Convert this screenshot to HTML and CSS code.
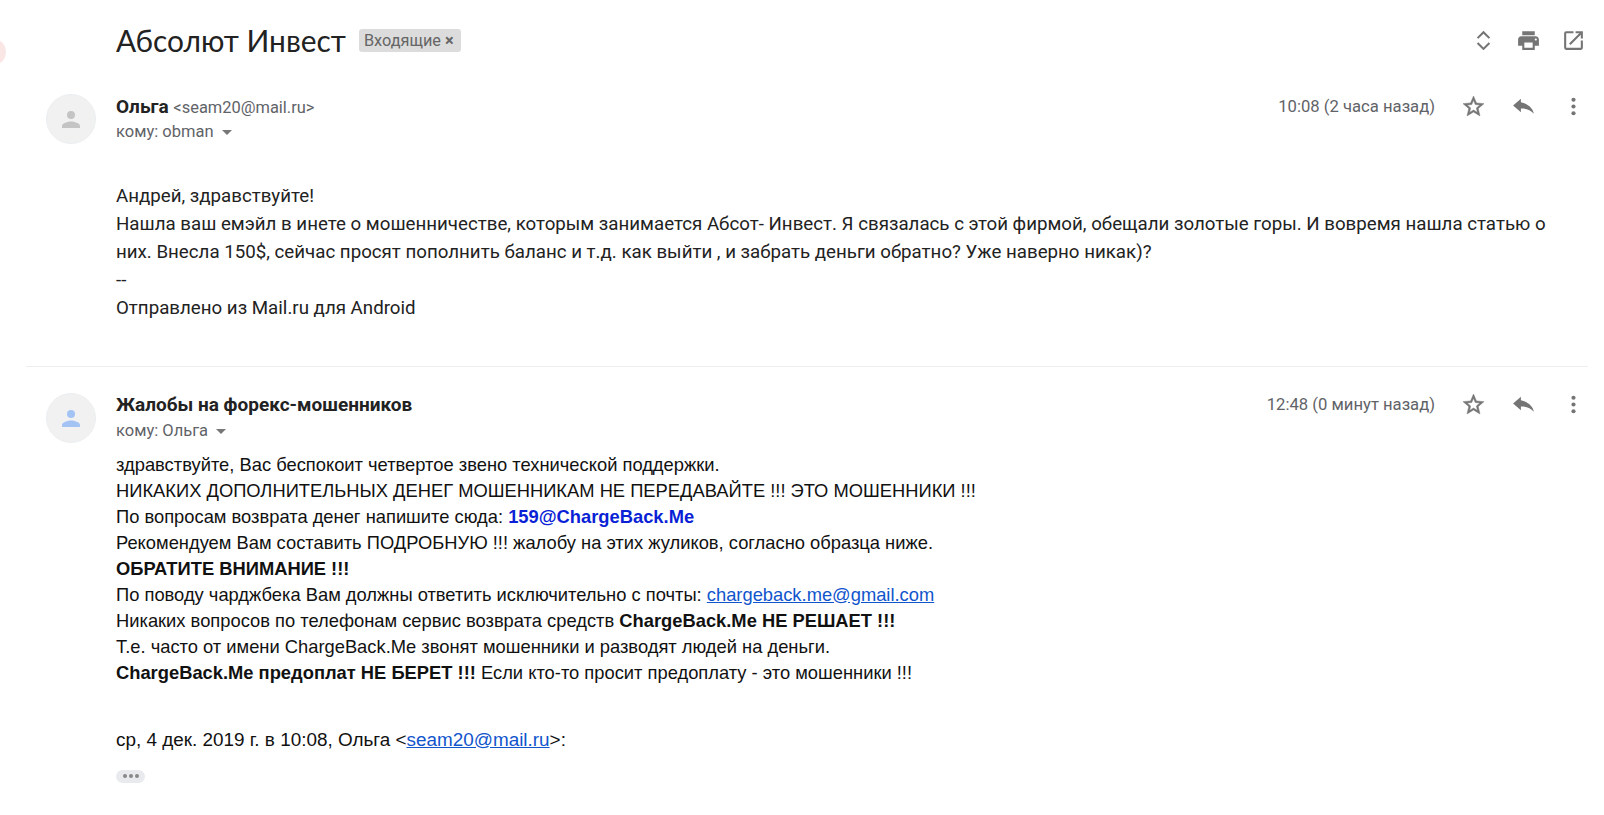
FILE: index.html
```html
<!DOCTYPE html>
<html lang="ru">
<head>
<meta charset="utf-8">
<title>Абсолют Инвест</title>
<link rel="stylesheet" href="styles.css">
</head>
<body>
<div class="edge-dot"></div>
<header class="subject-row">
  <h1 class="subject">Абсолют Инвест</h1>
  <span class="label">Входящие <span class="label-x">×</span></span>
  <div class="top-icons">
    <svg class="icon" viewBox="0 0 24 24"><path d="M12 5.400 17 10.400 18.400 9 12 2.600 5.600 9 7 10.400zM12 18.600 7 13.600 5.600 15 12 21.400 18.400 15 17 13.600z"/></svg>
    <svg class="icon" viewBox="0 0 24 24"><path d="M19 8H5c-1.660 0-3 1.340-3 3v6h4v4h12v-4h4v-6c0-1.660-1.340-3-3-3zm-3 11H8v-5h8v5zm3-7c-.55 0-1-.45-1-1s.45-1 1-1 1 .45 1 1-.45 1-1 1zm-1-9H6v4h12V3z"/></svg>
    <svg class="icon" viewBox="0 0 24 24"><path d="M19 19H5V5h7V3H5a2 2 0 0 0-2 2v14a2 2 0 0 0 2 2h14c1.100 0 2-.9 2-2v-7h-2v7zM14 3v2h3.590l-9.830 9.830 1.410 1.410L19 6.410V10h2V3h-7z"/></svg>
  </div>
</header>

<article class="message first">
  <div class="avatar"><svg viewBox="0 0 24 24" class="person gray"><circle cx="12" cy="8" r="4"/><path d="M3 21v-2c0-3 6-4.500 9-4.500s9 1.500 9 4.500v2z"/></svg></div>
  <div class="content">
    <div class="meta">
      <div class="who">
        <div class="from"><b class="name">Ольга</b> <span class="addr">&lt;seam20@mail.ru&gt;</span></div>
        <div class="to">кому: obman <i class="caret"></i></div>
      </div>
      <span class="time">10:08 (2 часа назад)</span>
      <div class="msg-icons">
        <svg class="icon star" viewBox="0 0 24 24"><path d="m22 9.240-7.190-.62L12 2 9.190 8.630 2 9.240l5.460 4.730L5.820 21 12 17.270 18.180 21l-1.630-7.030L22 9.240zM12 15.400l-3.760 2.270 1-4.280-3.320-2.880 4.380-.38L12 6.100l1.710 4.040 4.380.38-3.320 2.880 1 4.280L12 15.400z"/></svg>
        <svg class="icon" viewBox="0 0 24 24"><path d="M9.500 8V4.500L2 11l7.500 6.500v-3.600c5.500 0 9 1.200 12.500 5.100-1-5-5-9.500-12.500-11z"/></svg>
        <svg class="icon" viewBox="0 0 24 24"><circle cx="12" cy="5.500" r="2"/><circle cx="12" cy="12" r="2"/><circle cx="12" cy="18.500" r="2"/></svg>
      </div>
    </div>
    <div class="body-a">
      <p>Андрей, здравствуйте!</p>
      <p>Нашла ваш емэйл в инете о мошенничестве, которым занимается Абсот- Инвест. Я связалась с этой фирмой, обещали золотые горы. И вовремя нашла статью о них. Внесла 150$, сейчас просят пополнить баланс и т.д. как выйти , и забрать деньги обратно? Уже наверно никак)?</p>
      <p>--</p>
      <p>Отправлено из Mail.ru для Android</p>
    </div>
  </div>
</article>

<hr class="divider">

<article class="message second">
  <div class="avatar"><svg viewBox="0 0 24 24" class="person blue"><circle cx="12" cy="8" r="4"/><path d="M3 21v-2c0-3 6-4.500 9-4.500s9 1.500 9 4.500v2z"/></svg></div>
  <div class="content">
    <div class="meta">
      <div class="who">
        <div class="from"><b class="name">Жалобы на форекс-мошенников</b></div>
        <div class="to">кому: Ольга <i class="caret"></i></div>
      </div>
      <span class="time">12:48 (0 минут назад)</span>
      <div class="msg-icons">
        <svg class="icon star" viewBox="0 0 24 24"><path d="m22 9.240-7.190-.62L12 2 9.190 8.630 2 9.240l5.460 4.730L5.820 21 12 17.270 18.180 21l-1.630-7.030L22 9.240zM12 15.400l-3.760 2.270 1-4.280-3.320-2.880 4.380-.38L12 6.100l1.710 4.040 4.380.38-3.320 2.880 1 4.280L12 15.400z"/></svg>
        <svg class="icon" viewBox="0 0 24 24"><path d="M9.500 8V4.500L2 11l7.500 6.500v-3.600c5.500 0 9 1.200 12.500 5.100-1-5-5-9.500-12.500-11z"/></svg>
        <svg class="icon" viewBox="0 0 24 24"><circle cx="12" cy="5.500" r="2"/><circle cx="12" cy="12" r="2"/><circle cx="12" cy="18.500" r="2"/></svg>
      </div>
    </div>
    <div class="body-b">
      <p>здравствуйте, Вас беспокоит четвертое звено технической поддержки.</p>
      <p>НИКАКИХ ДОПОЛНИТЕЛЬНЫХ ДЕНЕГ МОШЕННИКАМ НЕ ПЕРЕДАВАЙТЕ !!! ЭТО МОШЕННИКИ !!!</p>
      <p>По вопросам возврата денег напишите сюда: <b class="mail-blue">159@ChargeBack.Me</b></p>
      <p>Рекомендуем Вам составить ПОДРОБНУЮ !!! жалобу на этих жуликов, согласно образца ниже.</p>
      <p><b>ОБРАТИТЕ ВНИМАНИЕ !!!</b></p>
      <p>По поводу чарджбека Вам должны ответить исключительно с почты: <a href="#">chargeback.me@gmail.com</a></p>
      <p>Никаких вопросов по телефонам сервис возврата средств <b>ChargeBack.Me НЕ РЕШАЕТ !!!</b></p>
      <p>Т.е. часто от имени ChargeBack.Me звонят мошенники и разводят людей на деньги.</p>
      <p><b>ChargeBack.Me предоплат НЕ БЕРЕТ !!!</b> Если кто-то просит предоплату - это мошенники !!!</p>
      <p class="quote-head">ср, 4 дек. 2019 г. в 10:08, Ольга &lt;<a href="#">seam20@mail.ru</a>&gt;:</p>
      <div class="more"><i></i><i></i><i></i></div>
    </div>
  </div>
</article>
</body>
</html>
```

FILE: styles.css
```css
* { box-sizing: border-box; }
html, body { height: 100%; }
body {
  margin: 0;
  background: #fff;
  color: #222;
  font-family: Roboto, "Liberation Sans", sans-serif;
  overflow: hidden;
  position: relative;
}
p { margin: 0; }
.edge-dot {
  position: absolute;
  left: -14px;
  top: 40px;
  width: 20px;
  height: 24px;
  border-radius: 50%;
  background: #fbe6e6;
}
.subject-row {
  display: flex;
  align-items: center;
  height: 80px;
  padding-left: 116px;
  padding-right: 18px;
}
.subject {
  margin: 0;
  font: 400 29.900px/40px Lato, "Open Sans", sans-serif;
  color: #222;
}
.label {
  margin-left: 13px;
  padding: 0 7px 0 5px;
  height: 23px;
  line-height: 23px;
  border-radius: 3px;
  background: #dcdcdc;
  color: #666;
  font-size: 16.300px;
}
.label-x { color: #666; font-weight: 700; }
.top-icons {
  margin-left: auto;
  display: flex;
  gap: 20px;
  fill: #757575;
}
.icon { width: 25px; height: 25px; display: block; }
.star { stroke: #757575; stroke-width: 0.5; }
.message { display: flex; padding-left: 46px; }
.avatar {
  flex: none;
  width: 50px;
  height: 50px;
  margin-top: 14px;
  margin-right: 20px;
  border-radius: 50%;
  background: #f1f1f1;
  border: 1px solid #eceff1;
  display: flex;
  align-items: center;
  justify-content: center;
}
.person { width: 24px; height: 24px; }
.person.gray { fill: #c4c4c4; }
.person.blue { fill: #a3c3f5; }
.content { flex: 1; min-width: 0; }
.meta { display: flex; align-items: flex-start; padding-right: 18px; }
.who { flex: 1; padding-top: 14px; }
.from { font-size: 19px; line-height: 25px; }
.name { font-weight: 700; color: #222; }
.addr { color: #5f6368; font-size: 16.450px; }
.to { color: #5f6368; font-size: 16.500px; line-height: 24px; }
.caret {
  display: inline-block;
  margin-left: 4px;
  vertical-align: middle;
  border-left: 5px solid transparent;
  border-right: 5px solid transparent;
  border-top: 5px solid #777;
}
.time { color: #5f6368; font-size: 16.650px; line-height: 25px; padding-top: 14px; margin-right: 26px; }
.msg-icons { display: flex; gap: 25px; padding-top: 14px; fill: #757575; }
.body-a {
  padding-top: 39px;
  padding-right: 40px;
  font-size: 18.720px;
  line-height: 27.900px;
  color: #222;
}
.divider {
  margin: 43px 16px 0 26px;
  border: 0;
  border-top: 1px solid #eee;
}
.second { margin-top: 12px; }
.second .who, .second .time, .second .msg-icons { padding-top: 13px; }
.second .to { line-height: 25px; margin-top: 1px; }
.body-b {
  padding-top: 9px;
  font-family: "Liberation Sans", Arial, sans-serif;
  font-size: 18.330px;
  line-height: 26px;
  color: #111;
}
.mail-blue { color: #0b1fd6; }
a { color: #1155cc; }
.quote-head { margin-top: 41px; font-size: 18.900px; }
.more {
  margin-top: 17px;
  width: 29px;
  height: 13px;
  border-radius: 7px;
  background: #e8eaed;
  display: flex;
  gap: 2px;
  align-items: center;
  justify-content: center;
}
.more i { width: 4px; height: 4px; border-radius: 50%; background: #888; }
```
